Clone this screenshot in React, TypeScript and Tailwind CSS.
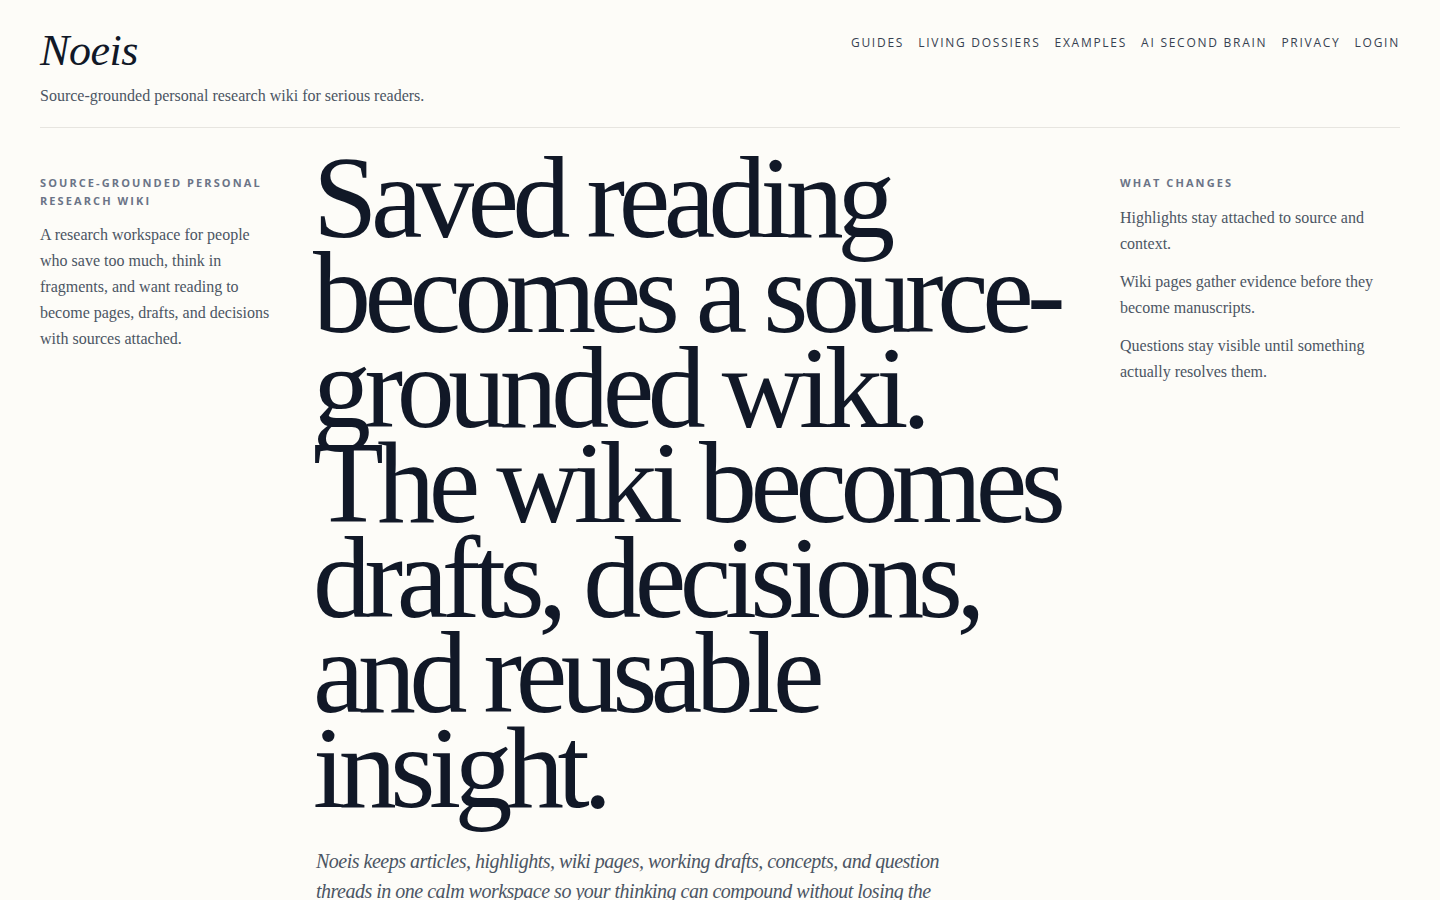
import React from 'react';

const serif = "font-['Liberation_Serif',serif]";
const sans = "font-['Open_Sans','Noto_Sans',sans-serif]";

const navItems = ['Guides', 'Living Dossiers', 'Examples', 'AI Second Brain', 'Privacy', 'Login'];

const changes = [
  'Highlights stay attached to source and context.',
  'Wiki pages gather evidence before they become manuscripts.',
  'Questions stay visible until something actually resolves them.',
];

export default function App() {
  return (
    <div className={`min-h-screen bg-[#fdfcf8] text-[#111827] ${serif}`}>
      <div className="px-10">
        {/* Header */}
        <header className="flex items-start justify-between pt-[26px] pb-[19px] border-b border-[#e7e5e0]">
          <div>
            <a href="#" className="block text-[44px] leading-[50px] italic tracking-[-0.01em] text-[#111827]">
              Noeis
            </a>
            <p className="mt-[8px] text-[16px] leading-[24px] text-[#4b5563]">
              Source-grounded personal research wiki for serious readers.
            </p>
          </div>
          <nav className={`flex items-center gap-[14px] pt-[8px] ${sans}`}>
            {navItems.map((item) => (
              <a
                key={item}
                href="#"
                className="text-[12px] leading-[18px] uppercase tracking-[0.145em] text-[#374151] hover:text-[#111827]"
              >
                {item}
              </a>
            ))}
          </nav>
        </header>

        {/* Hero */}
        <main className="grid grid-cols-[240px_1fr_280px] gap-9 pt-[23px]">
          <aside className="pt-[23px]">
            <h2 className={`text-[11px] leading-[18px] font-bold uppercase tracking-[0.19em] text-[#6b7487] ${sans}`}>
              Source-grounded personal research wiki
            </h2>
            <p className="mt-[12px] text-[16px] leading-[26px] text-[#4b5563]">
              A research workspace for people who save too much, think in fragments, and want reading to
              become pages, drafts, and decisions with sources attached.
            </p>
          </aside>

          <section>
            <h1 className="-ml-[3px] text-[116px] leading-[95px] tracking-[-0.056em] text-[#111827]">
              Saved reading becomes a source-grounded wiki. The wiki becomes drafts, decisions, and
              reusable insight.
            </h1>
            <p className="mt-[30px] max-w-[650px] text-[20px] leading-[30px] italic tracking-[-0.025em] text-[#4b5563]">
              Noeis keeps articles, highlights, wiki pages, working drafts, concepts, and question threads
              in one calm workspace so your thinking can compound without losing the source.
            </p>
          </section>

          <aside className="pt-[23px]">
            <h2 className={`text-[11px] leading-[18px] font-bold uppercase tracking-[0.19em] text-[#6b7487] ${sans}`}>
              What changes
            </h2>
            <div className="mt-[13px] flex flex-col gap-3">
              {changes.map((c) => (
                <p key={c} className="text-[16px] leading-[26px] text-[#4b5563]">
                  {c}
                </p>
              ))}
            </div>
          </aside>
        </main>
      </div>
    </div>
  );
}
